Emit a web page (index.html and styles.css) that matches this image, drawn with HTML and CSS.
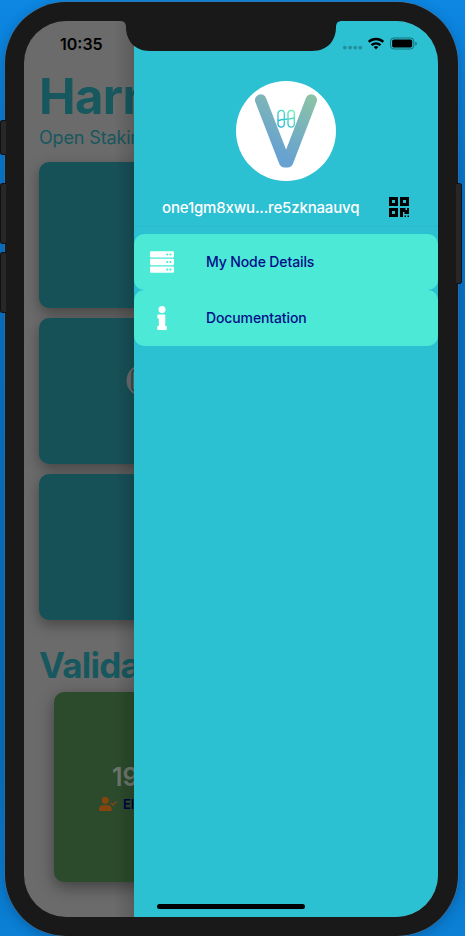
FILE: index.html
```html
<!DOCTYPE html>
<html lang="en">
<head>
<meta charset="utf-8">
<title>Harmony Validators</title>
<link rel="stylesheet" href="styles.css">
</head>
<body>
<div class="phone">
  <i class="key key-mute"></i><i class="key key-up"></i><i class="key key-down"></i><i class="key key-power"></i>
  <div class="screen">
    <main class="home">
      <h1 class="title">Harmony</h1>
      <p class="subtitle">Open Staking</p>
      <div class="cards">
        <section class="card"></section>
        <section class="card card-coin">
          <svg class="coin" width="33" height="33" viewBox="0 0 33 33"><circle cx="16.500" cy="16.500" r="16" fill="#6b6b6b"/><rect x="6" y="6" width="7" height="21" rx="3.500" fill="none" stroke="#175158" stroke-width="1.500"/></svg>
        </section>
        <section class="card"></section>
      </div>
      <h2 class="heading">Validators</h2>
      <section class="stats">
        <div class="count">198</div>
        <div class="elected">
          <svg width="18" height="14" viewBox="0 0 640 512" preserveAspectRatio="none" fill="#86450f"><circle cx="224" cy="128" r="125"/><path d="M0 512v-80c0-75 60-134 134-134h180c74 0 134 60 134 134v80z"/><path d="M425 218l72 74 133-132" fill="none" stroke="#86450f" stroke-width="48"/></svg>
          <span>Elected</span>
        </div>
      </section>
    </main>
    <aside class="drawer">
      <header class="profile">
        <svg class="avatar" width="100" height="100" viewBox="0 0 100 100">
          <defs>
            <linearGradient id="v" gradientUnits="userSpaceOnUse" x1="40" y1="70" x2="74" y2="16"><stop offset="0" stop-color="#68a2d0"/><stop offset="1" stop-color="#8ac2a7"/></linearGradient>
            <linearGradient id="h" gradientUnits="userSpaceOnUse" x1="42" y1="46" x2="58" y2="30"><stop offset="0" stop-color="#16a9dd"/><stop offset="1" stop-color="#65f5b5"/></linearGradient>
          </defs>
          <circle cx="50" cy="50" r="50" fill="#fff"/>
          <path d="M24.700 19L48.600 80.700H51.600L75.300 19" fill="none" stroke="url(#v)" stroke-width="11.500" stroke-linecap="round" stroke-linejoin="round"/>
          <path d="M48.300 38.700V32.500a3.150 3.150 0 0 0-6.300 0V43a3.150 3.150 0 0 0 6.300 0V38.700M42 40.200C46 36.500 54 40 58.300 36.200M52 38V32.500a3.150 3.150 0 0 1 6.300 0V43a3.150 3.150 0 0 1-6.300 0V38" fill="none" stroke="url(#h)" stroke-width="1.300"/>
        </svg>
        <div class="account">
          <span class="address">one1gm8xwu...re5zknaauvq</span>
          <svg class="qr" width="20" height="20" viewBox="0 0 20 20" fill="#000"><path fill-rule="evenodd" d="M0 0h9v9H0zM3 3v3h3V3zM11 0h9v9h-9zM14 3v3h3V3zM0 11h9v9H0zM3 14v3h3v-3zM11 11h5.500v2H18v-2h2v6h-4.500v-2H14v5h-3zM15.500 18.500H17V20h-1.500zM18.500 18.500H20V20h-1.500z"/></svg>
        </div>
      </header>
      <nav class="menu">
        <a class="item">
          <svg width="24" height="24" viewBox="0 0 24 24"><g fill="#fff"><rect y="1.200" width="24" height="6.400" rx="1.100"/><rect y="8.800" width="24" height="6.400" rx="1.100"/><rect y="16.400" width="24" height="6.400" rx="1.100"/></g><g fill="#4be9d6"><circle cx="17.200" cy="4.500" r="1.100"/><circle cx="20.400" cy="4.500" r="1.100"/><circle cx="17.200" cy="12" r="1.100"/><circle cx="20.400" cy="12" r="1.100"/><circle cx="17.200" cy="19.600" r="1.100"/><circle cx="20.400" cy="19.600" r="1.100"/></g></svg>
          <span>My Node Details</span>
        </a>
        <a class="item">
          <svg width="24" height="24" viewBox="0 0 24 24" fill="#fff"><circle cx="12" cy="3.500" r="3.500"/><path d="M8.100 8.600h6.400q.8 0 .8.800v10.600h.7q.8 0 .8.800v2.400q0 .8-.8.800H8q-.8 0-.8-.8v-2.400q0-.8.800-.8h.8v-7.400h-.7q-.8 0-.8-.8V9.400q0-.8.8-.8z"/></svg>
          <span>Documentation</span>
        </a>
      </nav>
    </aside>
    <svg class="notch" width="222" height="30" viewBox="0 0 222 30"><path d="M0 0c4 0 6 2 6 6 0 13 8 24 24 24h162c16 0 24-11 24-24 0-4 2-6 6-6z" fill="#191919"/></svg>
    <div class="status">
      <time>10:35</time>
      <svg width="76" height="14" viewBox="0 0 76 14">
        <g fill="#238f9c"><circle cx="2.800" cy="10.600" r="1.900"/><circle cx="8.100" cy="10.600" r="1.900"/><circle cx="13.200" cy="10.600" r="1.900"/><circle cx="18.300" cy="10.600" r="1.900"/></g>
        <g fill="none" stroke="#000" stroke-width="2.500"><path d="M26.700 4.900a10.700 10.700 0 0 1 14.600 0M29.500 8.100a6.800 6.800 0 0 1 9 0"/></g><path d="M31.700 10a3.300 3.300 0 0 1 4.600 0L34 12.500z"/>
        <rect x="48.500" y="1" width="23.300" height="11" rx="3.200" fill="none" stroke="#177078"/><rect x="50.100" y="2.600" width="20.100" height="7.800" rx="1.700"/><path d="M73.300 4.800v3.700q1.500-.5 1.500-1.850t-1.500-1.850z" fill="#177078"/>
      </svg>
    </div>
    <i class="home-bar"></i>
  </div>
</div>
</body>
</html>
```
FILE: styles.css
```css
* { box-sizing: border-box; }
body {
  margin: 0;
  height: 936px;
  overflow: hidden;
  background: linear-gradient(180deg, #0c87e2 0, #0874c8 22%, #0870be 80%, #0b80d5 100%);
  font-family: Inter, "Liberation Sans", sans-serif;
}
.phone {
  position: relative;
  width: 453px;
  height: 934px;
  margin: 2px 0 0 5px;
  padding: 19px;
  border-radius: 61px;
  background: #191919;
  box-shadow: 0 0 0 .5px #4b7797, 0 3px 12px rgba(0, 30, 70, .3);
}
.key {
  position: absolute;
  width: 6px;
  border: 1px solid #111;
  border-right: 0;
  border-radius: 3px 0 0 3px;
  background: #272727;
}
.key-mute { left: -5px; top: 118px; height: 35px; }
.key-up { left: -5px; top: 181px; height: 61px; }
.key-down { left: -5px; top: 250px; height: 61px; }
.key-power { right: -4px; top: 181px; height: 101px; border: 1px solid #111; border-left: 0; border-radius: 0 3px 3px 0; }
.screen {
  position: relative;
  display: flex;
  width: 414px;
  height: 896px;
  overflow: hidden;
  border-radius: 42px;
  background: #6b6b6b;
}
.home {
  position: relative;
  flex: 0 0 110px;
  overflow: hidden;
  padding: 47px 0 0 15px;
  color: #17585f;
  white-space: nowrap;
}
.home::after {
  content: "";
  position: absolute;
  inset: 0 0 0 auto;
  width: 20px;
  background: linear-gradient(90deg, transparent, rgba(0, 0, 0, .14));
}
.title { margin: 0; font-size: 49px; line-height: 58px; font-weight: 700; letter-spacing: -.6px; }
.subtitle { margin: 0; padding-top: 1px; font-size: 18px; line-height: 22px; letter-spacing: -.15px; }
.cards { display: flex; flex-direction: column; gap: 10px; width: 384px; margin-top: 13px; }
.card {
  height: 146px;
  border-radius: 10px;
  background: #175158;
  box-shadow: 0 5px 14px rgba(0, 0, 0, .35);
}
.card-coin { padding: 46px 0 0 87px; }
.heading { margin: 24px 0 0; font-size: 35px; line-height: 42px; font-weight: 700; letter-spacing: -.8px; }
.stats {
  width: 354px;
  height: 190px;
  margin: 6px 0 0 15px;
  padding: 69px 0 0 45px;
  border-radius: 10px;
  background: #2c4b2c;
  box-shadow: 0 5px 16px rgba(0, 0, 0, .4);
}
.count { padding-left: 13px; font-size: 25px; line-height: 32px; font-weight: 600; color: #6d766d; }
.elected { display: flex; align-items: center; gap: 6px; height: 22px; font-size: 13px; font-weight: 600; color: #000040; }
.drawer { flex: 0 0 304px; background: #2bc0d2; }
.profile {
  display: flex;
  flex-direction: column;
  align-items: center;
  height: 206px;
  padding-top: 60px;
  border-bottom: 1px solid #2bb9cc;
}
.avatar { flex: none; }
.account { display: flex; flex: none; align-self: stretch; align-items: center; height: 52px; padding-left: 28px; }
.address { width: 227px; font-size: 15px; font-weight: 500; letter-spacing: -.16px; color: #fff; white-space: nowrap; }
.menu { display: flex; flex-direction: column; padding-top: 7px; }
.item {
  display: flex;
  align-items: center;
  gap: 32px;
  height: 56px;
  padding-left: 16px;
  border-radius: 10px;
  background: #4be9d6;
  font-size: 14px;
  font-weight: 500;
  letter-spacing: -.12px;
  color: #000c87;
}
.item span { padding-bottom: 2px; }
.notch { position: absolute; left: 96px; top: 0; }
.status {
  position: absolute;
  inset: 13px 20px auto 36px;
  display: flex;
  align-items: center;
  justify-content: space-between;
  height: 20px;
}
.status time { font-size: 16px; font-weight: 600; }
.home-bar { position: absolute; left: 133px; bottom: 8px; width: 148px; height: 5px; border-radius: 3px; background: #000; }
```
